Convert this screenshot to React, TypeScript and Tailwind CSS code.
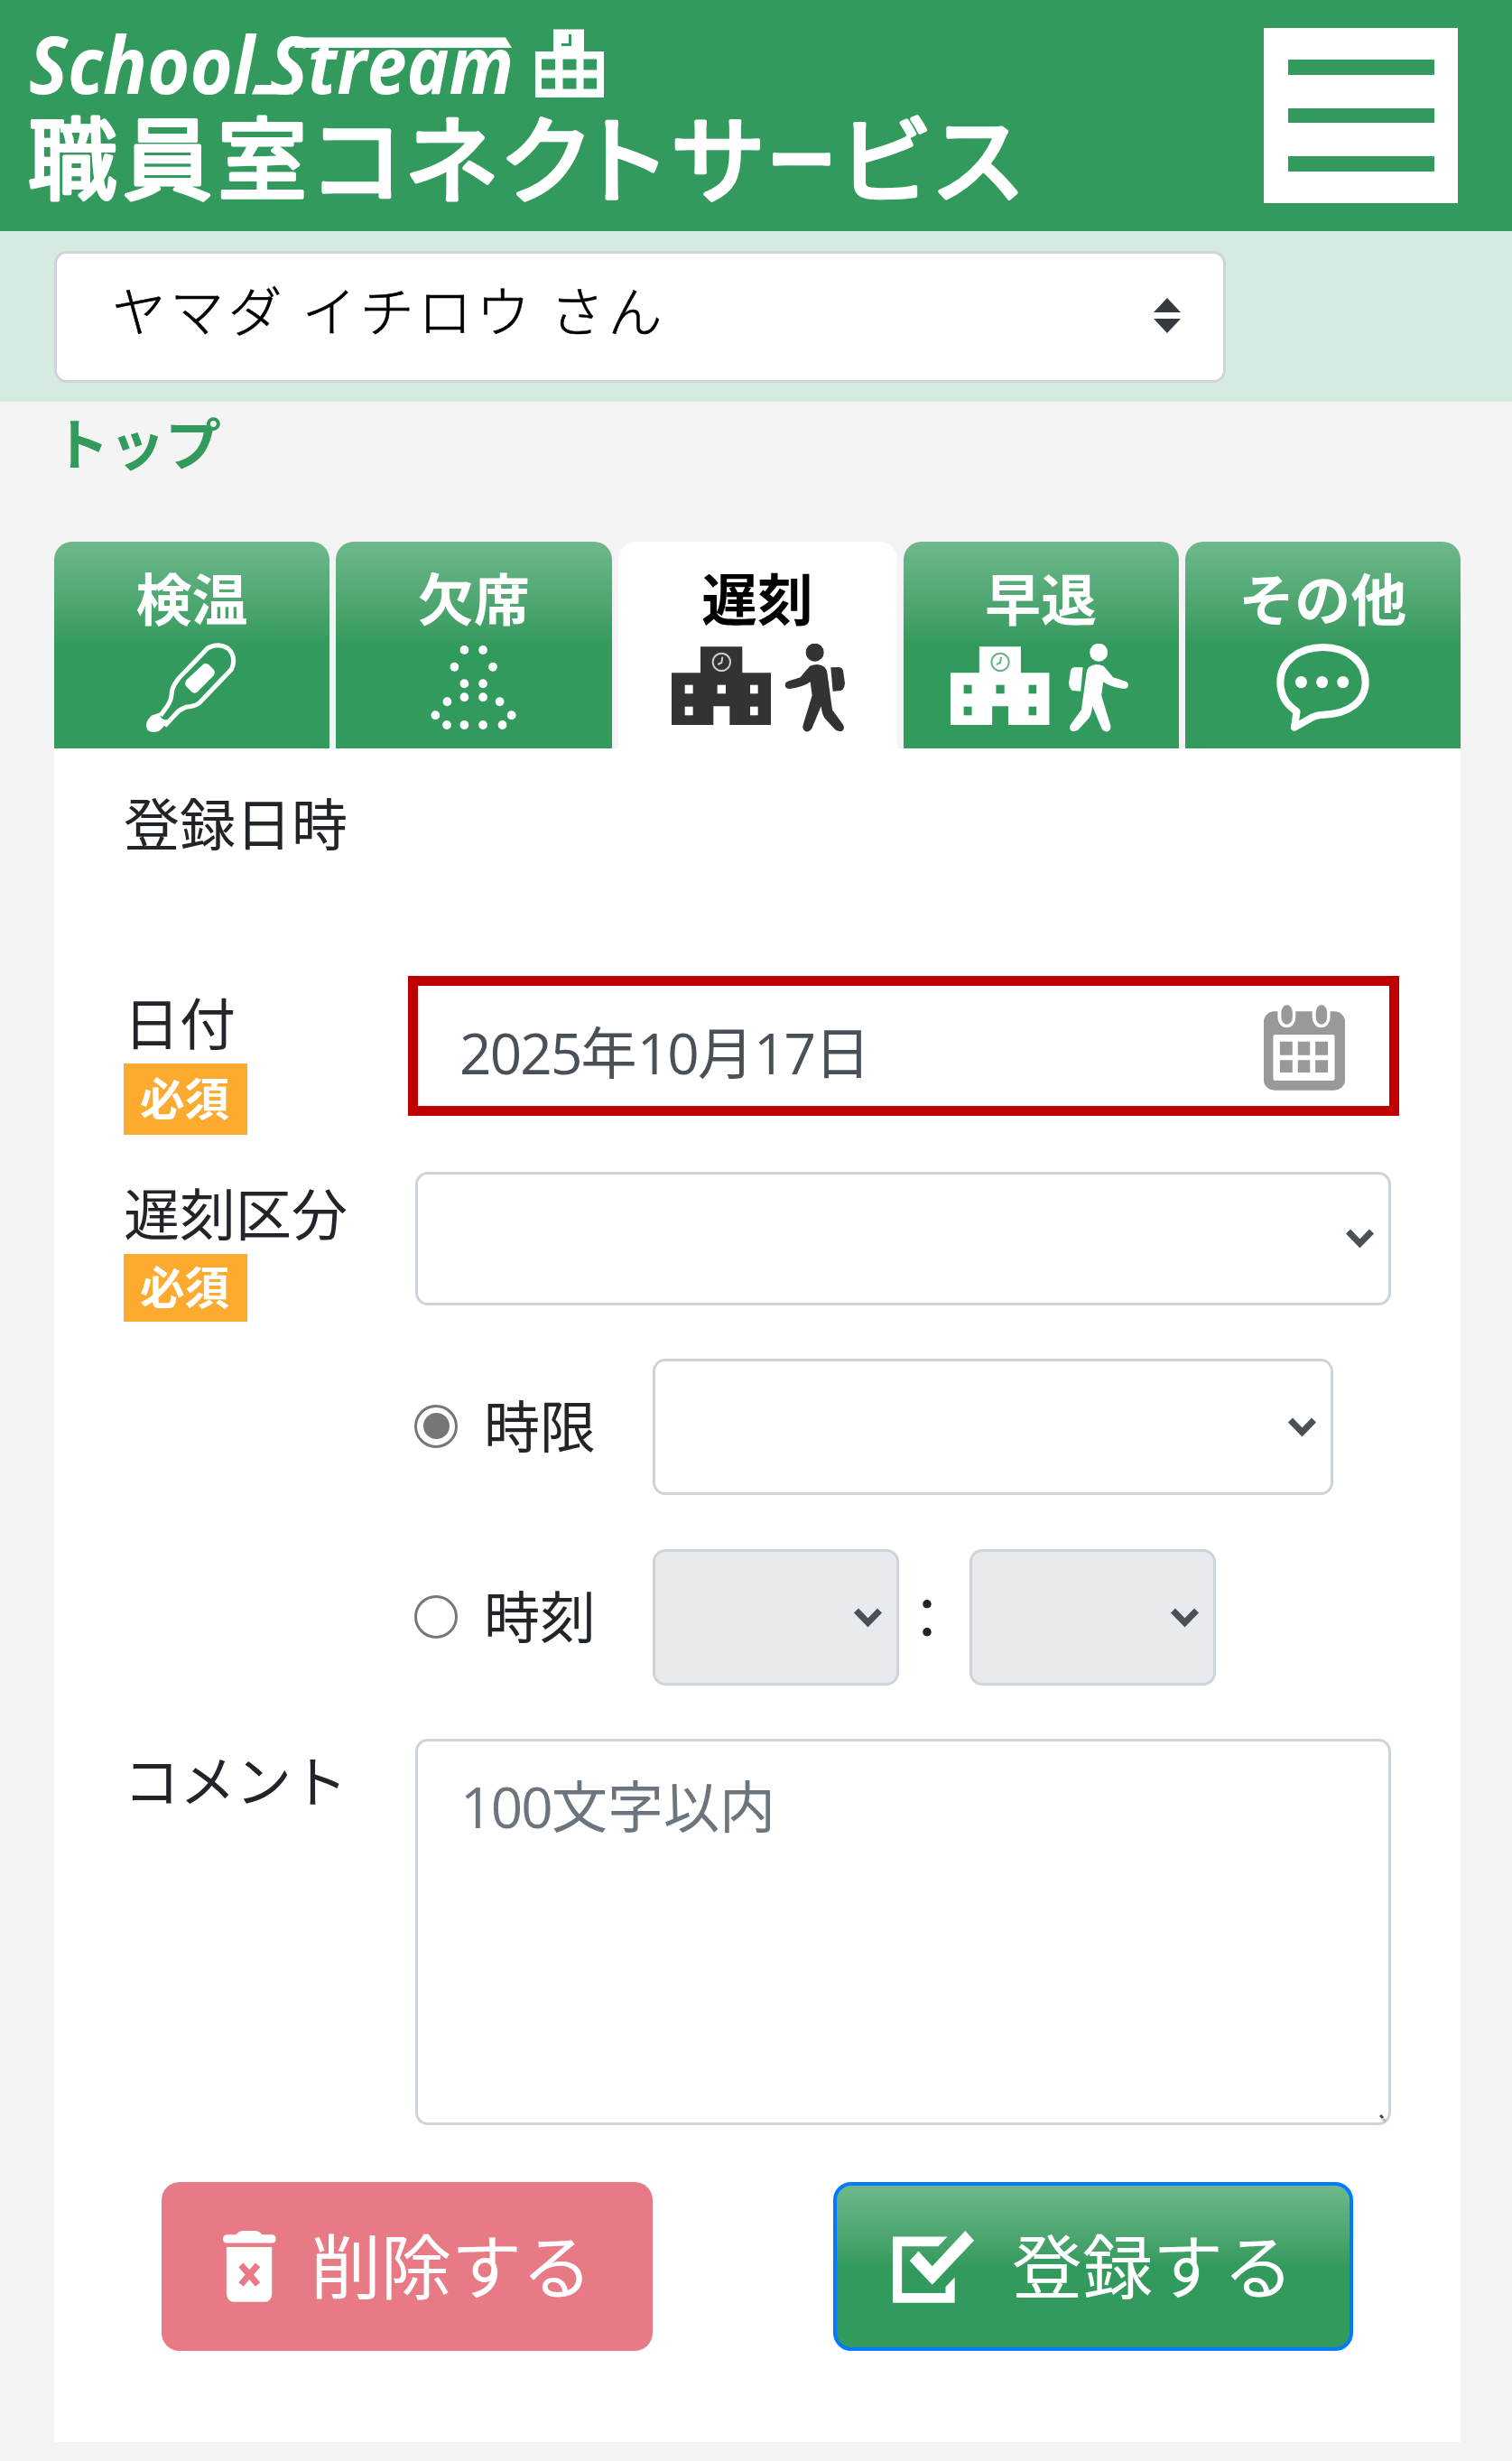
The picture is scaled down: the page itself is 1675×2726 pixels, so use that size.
import { useState } from "react";
import type { ReactNode } from "react";

const Logo = () => (
    <svg
        width="1110"
        height="210"
        viewBox="28 26 1110 210"
        fill="#fff"
        className="overflow-visible font-['Noto_Sans_CJK_JP',sans-serif]"
    >
        <g className="font-['Open_Sans',sans-serif] font-bold italic" fontSize="88">
            <text x="32" y="104" textLength="250" lengthAdjust="spacingAndGlyphs">
                School
            </text>
            <text x="299" y="104" textLength="270" lengthAdjust="spacingAndGlyphs">
                Stream
            </text>
        </g>
        {/* speed lines running out of the S */}
        <path d="M330 41.5H560L567 53H326Z" />
        <path d="M283 94H325V104.5H279Z" />

        {/* school building */}
        <path
            fillRule="evenodd"
            d="M613 32.5H647V57H669V108H593V57H613ZM600 65.5V77.5H615V65.5ZM623.500 65.500V77.500H638.500V65.500ZM646.500 65.500V77.500H661V65.500ZM600 86.500V98.500H615V86.500ZM623.500 86.500V98.500H638.500V86.500ZM646.500 86.500V98.500H661V86.500Z"
        />
        <path d="M631.500 38V49.500H622" fill="none" stroke="#339a5d" strokeWidth="3" />

        <g fontWeight="400" stroke="#fff" strokeWidth="4.500" strokeLinejoin="round">
            <text x="31 136 241" y="213" fontSize="99" strokeWidth="4">
                職員室
            </text>
            <text x="342 448 553 638 743" y="216" fontSize="105">
                コネクトサ
            </text>
            <text x="850" y="216" fontSize="105" textLength="76" lengthAdjust="spacingAndGlyphs">
                ー
            </text>
            <text x="928 1031" y="216" fontSize="105">
                ビス
            </text>
        </g>
    </svg>
);

const School = ({ cut }: { cut: string }) => (
    <g>
        <path d="M348 408H487V495H582V668H445V606H391V668H252V495H348Z" fill="currentColor" />
        <g fill={cut}>
            <rect x="296" y="535" width="27" height="29" />
            <rect x="404" y="535" width="28" height="29" />
            <rect x="513" y="535" width="26" height="29" />
            <rect x="296" y="607" width="27" height="29" />
            <rect x="513" y="607" width="26" height="29" />
        </g>
        <circle cx="418" cy="459" r="29" fill="none" stroke={cut} strokeWidth="6" opacity="0.75" />
        <path d="M421 442L418 461L406 467" fill="none" stroke={cut} strokeWidth="6" opacity="0.75" />
    </g>
);

const Walker = () => (
    <g fill="currentColor">
        <circle cx="728" cy="427" r="30" />
        <path d="M712 472Q740 460 760 475Q768 483 769 495L786 618L822 667Q829 680 819 688Q806 692 796 684L762 647Q752 635 749 606L718 680Q710 692 698 690Q685 684 689 668L719 570L713 525Q690 542 645 548Q630 548 629 535Q630 525 642 522L680 510Q695 490 712 472Z" />
        <path d="M781 477L808 476Q820 478 822 488L828 530Q827 548 815 554L788 556Z" />
    </g>
);

const ThermometerIcon = () => (
    <svg width="101" height="100" viewBox="286 394 240 300" preserveAspectRatio="none" className="-ml-[3px]">
        <path
            d="M326 636L345 602Q355 584 356 555Q359 535 374 512L450 412Q476 392 503 412Q527 440 513 482L428 594Q416 605 395 607Q378 614 368 628L337 670"
            fill="none"
            stroke="#fff"
            strokeWidth="5"
            vectorEffect="non-scaling-stroke"
        />
        <path
            d="M302 636L325 626Q322 644 337 650L350 650L325 685Q306 698 292 684Q284 666 293 650Z"
            fill="#fff"
        />
        <path
            d="M438 466Q446 458 453 467L466 483Q471 490 466 503L424 556Q416 566 408 557L393 538Q388 530 394 518Z"
            fill="#fff"
        />
    </svg>
);

const DOTS = [
    [1127, 420], [1176, 420], [1101, 476], [1202, 476],
    [1127, 532], [1176, 532], [1127, 577], [1176, 577],
    [1082, 592], [1220, 592], [1051, 637], [1251, 637],
    [1081, 669], [1127, 669], [1176, 669], [1227, 669],
];

const AbsentIcon = () => (
    <svg width="97" height="96" viewBox="1036 402 230 288" preserveAspectRatio="none" className="mt-[2px]">
        {DOTS.map(([x, y]) => (
            <ellipse key={`${x}-${y}`} cx={x} cy={y} rx="11.500" ry="15" fill="#fff" />
        ))}
    </svg>
);

const LateIcon = () => (
    <svg width="192" height="98" viewBox="252 398 576 294" className="ml-[2px] mt-px text-[#333]">
        <School cut="#fff" />
        <Walker />
    </svg>
);

const LeaveIcon = () => (
    <svg width="197" height="98" viewBox="252 398 594 294" preserveAspectRatio="none" className="-ml-[3px] mt-px text-white">
        <School cut="#339a5d" />
        <g transform="translate(1475 0) scale(-1 1)">
            <Walker />
        </g>
    </svg>
);

const OtherIcon = () => (
    <svg width="105" height="99" viewBox="976 396 236 298" preserveAspectRatio="none">
        <path
            d="M1095 411C1155 411 1200 460 1200 527C1200 590 1160 634 1095 636Q1073 637 1058 652L1023 678L1029 625C1000 600 988 565 988 527C988 460 1033 411 1095 411Z"
            fill="none"
            stroke="#fff"
            strokeWidth="8"
            strokeLinejoin="round"
            vectorEffect="non-scaling-stroke"
        />
        <g fill="#fff">
            <ellipse cx="1040" cy="527" rx="14.500" ry="20" />
            <ellipse cx="1092" cy="527" rx="14.500" ry="20" />
            <ellipse cx="1144" cy="527" rx="14.500" ry="20" />
        </g>
    </svg>
);

const CalendarIcon = () => (
    <svg width="90" height="95" viewBox="1012 218 181 285" preserveAspectRatio="none" fill="#999">
        <rect x="1012" y="240" width="181" height="262" rx="24" ry="34" />
        <rect x="1033" y="317" width="137" height="153" rx="5" ry="7" fill="#fff" />
        <g fill="#fff">
            <rect x="1043" y="208" width="40" height="86" rx="20" ry="34" />
            <rect x="1120" y="208" width="40" height="86" rx="20" ry="34" />
        </g>
        <rect x="1051" y="219" width="25" height="64" rx="12" ry="24" />
        <rect x="1128" y="219" width="25" height="64" rx="12" ry="24" />
        <path d="M1048 340h28v45h-28zM1088 340h27v45h-27zM1127 340h28v45h-28zM1048 402h28v41h-28zM1088 402h27v41h-27zM1127 402h28v41h-28z" />
    </svg>
);

const TrashIcon = () => (
    <svg width="59" height="79" viewBox="292 455 136 238" preserveAspectRatio="none" fill="#fff">
        <path d="M302 468H325Q333 455 345 455H372Q385 455 392 468H418Q427 470 427 483Q427 495 418 496H302Q292 495 292 483Q292 470 302 468Z" />
        <path d="M301 509H417V665Q415 692 400 692H318Q303 690 301 665Z" />
        <path
            d="M338 569L381 634M381 569L338 634"
            stroke="#e77a85"
            strokeWidth="7"
            vectorEffect="non-scaling-stroke"
        />
    </svg>
);

const CheckIcon = () => (
    <svg width="90" height="80" viewBox="216 515 177 238" preserveAspectRatio="none" fill="#fff">
        <path d="M216 534H335L315 566H236V720H331V700L351 668V752H216Z" />
        <path d="M253 614L272 582L302 632L374 515L393 547L302 693Z" />
    </svg>
);

const Chevron = () => (
    <svg
        width="33"
        height="22"
        viewBox="0 0 33 22"
        className="pointer-events-none absolute right-[18px] top-1/2 -mt-[11px]"
    >
        <path d="M3.500 3L16.500 16.500L29.500 3" fill="none" stroke="#495057" strokeWidth="7" />
    </svg>
);

const SelectBox = ({ className, disabled }: { className: string; disabled?: boolean }) => (
    <div className={`relative ${className}`}>
        <select
            disabled={disabled}
            className="block h-full w-full appearance-none rounded-[14px] border-[3.500px] border-[#ced4da] bg-white disabled:bg-[#e7ebee] disabled:opacity-100"
        />
        <Chevron />
    </div>
);

const Required = ({ className }: { className: string }) => (
    <span
        className={`flex w-[137px] items-center justify-center bg-[#fcab30] pb-[5px] pr-[2px] text-[49.500px] font-bold leading-none text-white ${className}`}
    >
        必須
    </span>
);

const Radio = ({
    label,
    checked,
    onChange,
}: {
    label: string;
    checked: boolean;
    onChange: () => void;
}) => (
    <label className="-ml-px mr-px flex w-[263px] items-center">
        <input
            type="radio"
            name="time"
            checked={checked}
            onChange={onChange}
            className="peer sr-only"
        />
        <span className="-mt-[2px] flex h-12 w-12 items-center justify-center rounded-full border-[3.500px] border-[#767676] bg-white">
            {checked && <span className="h-[29px] w-[29px] rounded-full bg-[#767676]" />}
        </span>
        <span className="-mt-[8px] ml-[29px]">{label}</span>
    </label>
);

// Latin digits are set a little tighter than the kanji around them
const Num = ({ children }: { children: ReactNode }) => (
    <span className="font-['Open_Sans',sans-serif] tracking-[-1.800px]">{children}</span>
);

const TABS = [
    { label: "検温", icon: <ThermometerIcon /> },
    { label: "欠席", icon: <AbsentIcon /> },
    { label: "遅刻", icon: <LateIcon />, active: true },
    { label: "早退", icon: <LeaveIcon /> },
    { label: "その他", icon: <OtherIcon /> },
];

const App: React.FC = () => {
    const [mode, setMode] = useState<"period" | "time">("period");

    return (
        <div
            lang="ja"
            className="h-[2726px] w-[1675px] overflow-hidden bg-[#f4f4f4] font-['Noto_Sans_CJK_JP',sans-serif] text-[62px] leading-[92px] text-[#212529]"
        >
            {/* Header */}
            <header className="flex h-[256px] items-start justify-between bg-[#339a5d] pl-7 pr-[60px]">
                <div className="pt-[26px]">
                    <Logo />
                </div>
                <button className="mt-[31px] flex h-[194px] w-[215px] flex-col items-center gap-[37px] bg-white pt-[35px]">
                    <span className="h-[16.500px] w-[162px] bg-[#339a5d]" />
                    <span className="h-[16.500px] w-[162px] bg-[#339a5d]" />
                    <span className="h-[16.500px] w-[162px] bg-[#339a5d]" />
                </button>
            </header>

            {/* User */}
            <div className="h-[189px] bg-[#d6eadf] pl-[60px] pt-[22px]">
                <div className="flex h-[146px] w-[1298px] items-center justify-between rounded-[14px] border-[3px] border-[#ced4da] bg-white pl-[61px] pr-[47px]">
                    <span className="-mt-[18px] text-[60px] font-light tracking-[4.300px] text-black [-webkit-text-stroke:0.600px_black]">
                        ヤマダ イチロウ さん
                    </span>
                    <svg width="30" height="39" viewBox="0 0 30 39" fill="#343a40" className="-mt-[4px]">
                        <path d="M15 0L30 16H0ZM15 39L30 23H0Z" />
                    </svg>
                </div>
            </div>

            <div className="flex h-[155px] pl-[59px] font-bold text-[#339a5d]">
                <span className="-mt-[2px]">トップ</span>
            </div>

            {/* Tabs */}
            <nav className="flex h-[229px] gap-[7px] px-[60px] pr-[57px]">
                {TABS.map((tab) => (
                    <button
                        key={tab.label}
                        className={
                            tab.active
                                ? "flex w-[309px] flex-col items-center rounded-t-[20px] bg-white text-black"
                                : "flex flex-1 flex-col items-center rounded-t-[20px] bg-linear-to-b from-[#6eb88c] to-[#339a5d] to-50% text-white"
                        }
                    >
                        <span className="mt-[15px] h-[97px] font-bold">{tab.label}</span>
                        {tab.icon}
                    </button>
                ))}
            </nav>

            {/* Form */}
            <main className="ml-[60px] h-[1876px] w-[1558px] bg-white px-[77px] pt-[35px]">
                <div className="h-[217px]">登録日時</div>

                <div className="flex h-[215px]">
                    <div className="w-[315px] pt-1">
                        <div>日付</div>
                        <Required className="mt-px h-[79px]" />
                    </div>
                    <div className="-mr-[9px] flex h-[155px] flex-1 justify-between border-[11px] border-[#c00000] bg-white pl-[46px] pr-[49px]">
                        <span className="mt-[25px] text-[#495057]">
                            <Num>2025</Num>年<Num>10</Num>月<Num>17</Num>日
                        </span>
                        <span className="mt-[21px]">
                            <CalendarIcon />
                        </span>
                    </div>
                </div>

                <div className="flex h-[209px]">
                    <div className="w-[323px]">
                        <div>遅刻区分</div>
                        <Required className="mt-px h-[75px]" />
                    </div>
                    <SelectBox className="mt-[2px] h-[148px] flex-1" />
                </div>

                <div className="mb-[60px] ml-[323px] flex h-[151px] items-center">
                    <Radio label="時限" checked={mode === "period"} onChange={() => setMode("period")} />
                    <SelectBox className="h-[151px] w-[754px]" />
                </div>

                <div className="mb-[59px] ml-[323px] flex h-[151px] items-center">
                    <Radio label="時刻" checked={mode === "time"} onChange={() => setMode("time")} />
                    <SelectBox className="h-[151px] w-[273px]" disabled={mode !== "time"} />
                    <span className="-mt-[5px] w-[78px] text-center">
                        <span className="-ml-[16px]">：</span>
                    </span>
                    <SelectBox className="h-[151px] w-[273px]" disabled={mode !== "time"} />
                </div>

                <div className="flex">
                    <div className="-mt-[2px] h-[92px] w-[323px]">コメント</div>
                    <div className="relative h-[428px] flex-1 rounded-[14px] border-[3.500px] border-[#ced4da] bg-white pl-[47px] pt-[23px] text-[#6c757d]">
                        <Num>100</Num>文字以内
                        <svg width="10" height="10" viewBox="0 0 10 10" className="absolute bottom-0 right-0">
                            <path d="M1 2L4 5" stroke="#444" strokeWidth="3" />
                            <path d="M4 6L7 9" stroke="#bbb" strokeWidth="3" />
                        </svg>
                    </div>
                </div>

                {/* Actions */}
                <div className="mt-[63px] flex justify-between pl-[42px] pr-[42px] text-[78px] text-white">
                    <button className="flex h-[187px] w-[544px] items-center rounded-[20px] bg-[#e77a85] pl-[68px]">
                        <TrashIcon />
                        <span className="-mt-[7px] ml-[38px]">削除する</span>
                    </button>
                    <button className="flex h-[187px] w-[576px] items-center rounded-[20px] border-4 border-[#007bff] bg-linear-to-b from-[#6eb88c] to-[#339a5d] to-50% pl-[62px]">
                        <CheckIcon />
                        <span className="-mt-[7px] ml-[42px]">登録する</span>
                    </button>
                </div>
            </main>
        </div>
    );
};

export default App;
